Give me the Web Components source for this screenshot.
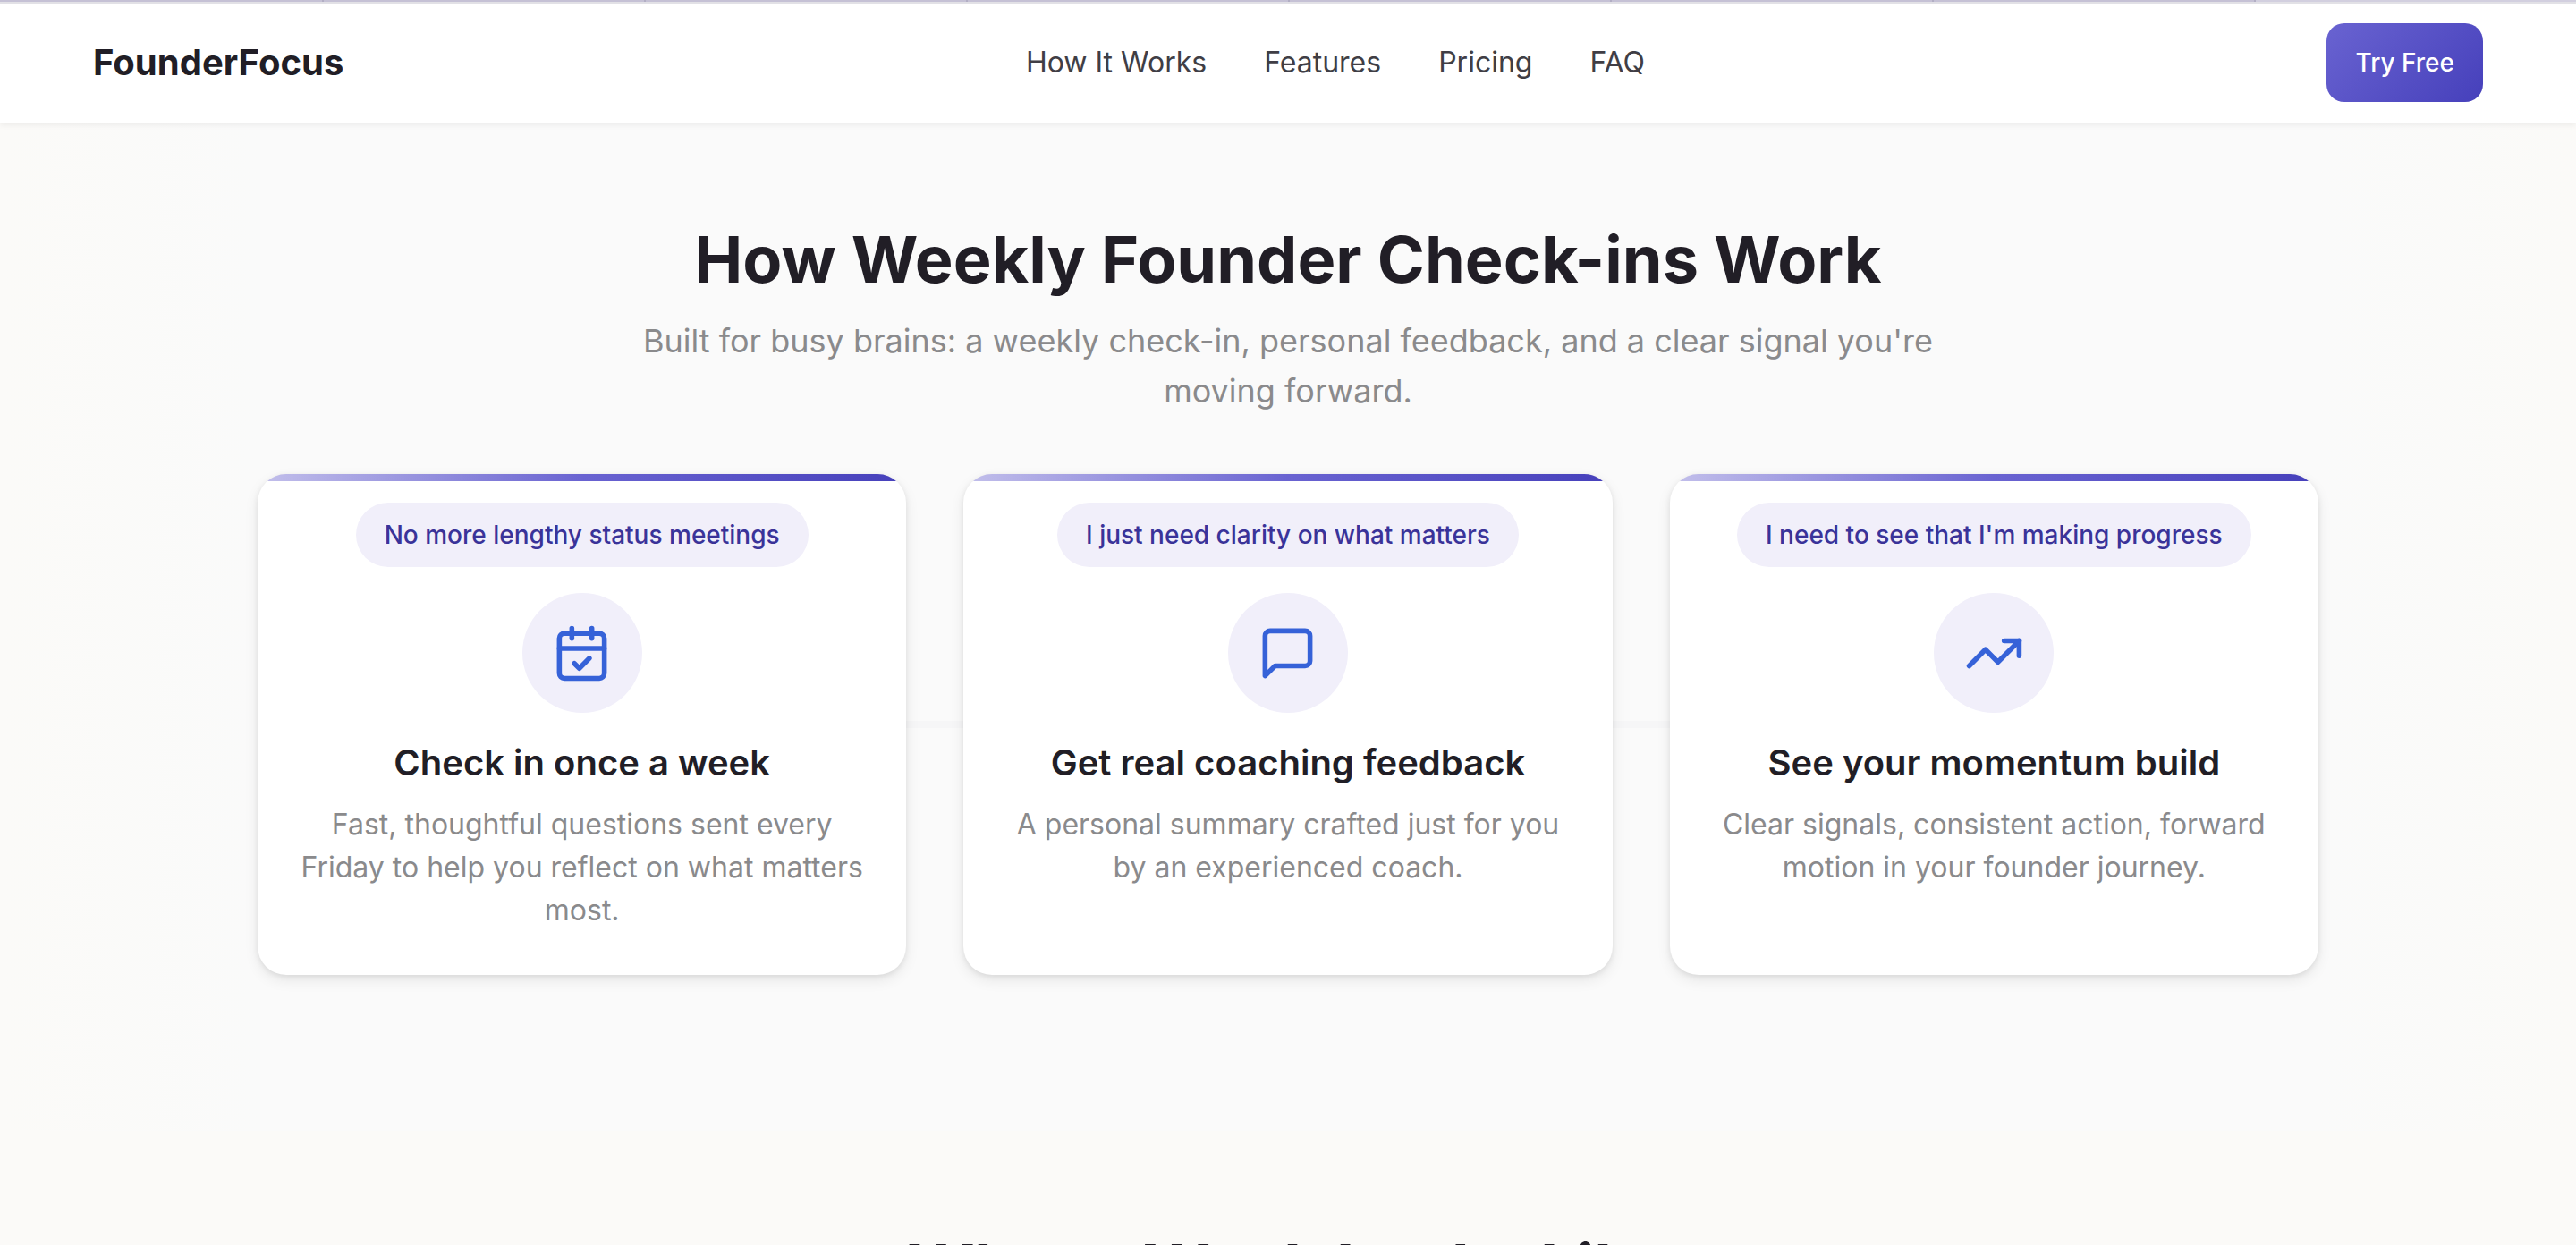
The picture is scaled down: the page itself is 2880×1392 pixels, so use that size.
<!DOCTYPE html>
<html lang="en">
<head>
<meta charset="utf-8">
<title>FounderFocus</title>
<style>
    body {
        margin: 0;
        height: 100vh;
        overflow: hidden;
        font-family: Inter, sans-serif;
        color: #211e26;
        background: #fbfaf8;
    }
</style>
</head>
<body>

<site-header>
    <a slot="brand" href="#top">FounderFocus</a>
    <a href="#how">How It Works</a>
    <a href="#features">Features</a>
    <a href="#pricing">Pricing</a>
    <a href="#faq">FAQ</a>
    <cta-button slot="action">Try Free</cta-button>
</site-header>

<main>
    <page-section id="how" class="tinted">
        <section-heading>
            How Weekly Founder Check-ins Work
            <span slot="lead">Built for busy brains: a weekly check-in, personal feedback, and a clear signal you're moving forward.</span>
        </section-heading>
        <step-list>
            <step-card data-icon="calendar" data-quote="No more lengthy status meetings" data-title="Check in once a week">Fast, thoughtful questions sent every Friday to help you reflect on what matters most.</step-card>
            <step-card data-icon="message" data-quote="I just need clarity on what matters" data-title="Get real coaching feedback">A personal summary crafted just for you by an experienced coach.</step-card>
            <step-card data-icon="trend" data-quote="I need to see that I'm making progress" data-title="See your momentum build">Clear signals, consistent action, forward motion in your founder journey.</step-card>
        </step-list>
    </page-section>
    <page-section id="features">
        <section-heading>What a Week Looks Like</section-heading>
    </page-section>
</main>

<script>
    function attach(host, html) {
        const template = document.createElement('template');
        template.innerHTML = html;

        const shadowRoot = host.attachShadow({ mode: 'open' });
        shadowRoot.appendChild(template.content.cloneNode(true));
    }

    class SiteHeader extends HTMLElement {

        constructor() {
            super();

            attach(this, `<style>
                    :host {
                        display: block;
                        position: relative;
                        background: #fff;
                        box-shadow: 0 2px 6px rgba(0, 0, 0, 0.06);
                    }

                    .strip {
                        display: grid;
                        grid-template-columns: repeat(8, 1fr);
                        height: 2px;
                        background: #c5c1d5;
                        border-bottom: 2px solid #e2e1e6;
                    }

                    .strip span + span {
                        border-left: 2px solid #b2aec4;
                    }

                    .strip span:last-child {
                        background: #d2cfdf;
                    }

                    .bar {
                        display: flex;
                        align-items: center;
                        justify-content: space-between;
                        padding: 22px 104px 24px;
                    }

                    nav {
                        display: flex;
                        gap: 64px;
                    }

                    ::slotted(a) {
                        font-size: 32px;
                        line-height: 40px;
                        color: #403e45;
                        text-decoration: none;
                    }

                    ::slotted(a[slot="brand"]) {
                        font-size: 40px;
                        font-weight: 700;
                        line-height: 48px;
                        color: #211e26;
                    }
                </style>
                <div class="strip"><span></span><span></span><span></span><span></span><span></span><span></span><span></span><span></span></div>
                <header class="bar">
                    <slot name="brand"></slot>
                    <nav><slot></slot></nav>
                    <slot name="action"></slot>
                </header>`);
        }
    }

    class CtaButton extends HTMLElement {

        constructor() {
            super();

            attach(this, `<style>
                    :host {
                        display: block;
                    }

                    button {
                        display: block;
                        padding: 24px 32px;
                        border: 0;
                        border-radius: 20px;
                        font: 500 28px/40px Inter, sans-serif;
                        color: #fff;
                        background: linear-gradient(135deg, #6963d1, #4640bb);
                    }
                </style>
                <button type="button"><slot></slot></button>`);
        }
    }

    class PageSection extends HTMLElement {

        constructor() {
            super();

            attach(this, `<style>
                    :host {
                        display: block;
                        padding: 109px 10% 128px;
                    }

                    :host(.tinted) {
                        padding-bottom: 175px;
                        background: linear-gradient(90deg, #fbfaf8, #fafafa 10%, #fafafa 90%, #fbfaf8);
                    }
                </style>
                <slot></slot>`);
        }
    }

    class SectionHeading extends HTMLElement {

        constructor() {
            super();

            attach(this, `<style>
                    :host {
                        display: block;
                        text-align: center;
                    }

                    h2 {
                        margin: 0;
                        font-size: 72px;
                        font-weight: 700;
                        line-height: 86px;
                    }

                    p {
                        max-width: 1460px;
                        margin: 20px auto 65px;
                        font-size: 36px;
                        line-height: 56px;
                        color: #8a8a8c;
                    }
                </style>
                <h2><slot></slot></h2>
                <p><slot name="lead"></slot></p>`);
        }
    }

    class StepList extends HTMLElement {

        constructor() {
            super();

            attach(this, `<style>
                    :host {
                        display: grid;
                        grid-template-columns: repeat(3, 1fr);
                        gap: 64px;
                        /* connector running behind the cards */
                        background: linear-gradient(#f6f6f7, #f6f6f7) center / 100% 8px no-repeat;
                    }
                </style>
                <slot></slot>`);
        }
    }

    const icons = {
        calendar: '<path d="M8 2v4M16 2v4M3 10h18"/><rect x="3" y="4" width="18" height="18" rx="2"/><path d="m9 16 2 2 4-4"/>',
        message: '<path d="M21 15a2 2 0 0 1-2 2H7l-4 4V5a2 2 0 0 1 2-2h14a2 2 0 0 1 2 2z"/>',
        trend: '<path d="m2 17 6.5-6.5 5 5L22 7"/><path d="M16 7h6v6"/>'
    };

    class StepCard extends HTMLElement {

        static get observedAttributes() { return ['data-icon', 'data-quote', 'data-title']; }

        constructor() {
            super();

            attach(this, `<style>
                    :host {
                        display: flex;
                        flex-direction: column;
                        align-items: center;
                        overflow: hidden;
                        padding: 0 40px 48px;
                        border-radius: 32px;
                        text-align: center;
                        background: linear-gradient(90deg, #c3c0eb, #6963d1 50%, #4640bb) top / 100% 8px no-repeat #fff;
                        box-shadow: 0 6px 16px rgba(0, 0, 0, 0.08), 0 2px 6px rgba(0, 0, 0, 0.08);
                    }

                    .quote {
                        margin-top: 32px;
                        padding: 16px 32px;
                        border-radius: 36px;
                        font-size: 28px;
                        font-weight: 500;
                        line-height: 40px;
                        color: #3a3399;
                        background: #f1effa;
                    }

                    .icon {
                        display: grid;
                        place-items: center;
                        width: 134px;
                        height: 134px;
                        margin: 29px 0 32px;
                        border-radius: 50%;
                        background: #f1effa;
                    }

                    svg {
                        width: 67px;
                        height: 67px;
                        fill: none;
                        stroke: #3662d8;
                        stroke-width: 2;
                        stroke-linecap: round;
                        stroke-linejoin: round;
                    }

                    h3 {
                        margin: 0 0 21px;
                        font-size: 40px;
                        font-weight: 600;
                        line-height: 48px;
                    }

                    p {
                        margin: 0;
                        font-size: 32px;
                        line-height: 48px;
                        color: #8a8a8c;
                    }
                </style>
                <div class="quote"></div>
                <div class="icon"><svg viewBox="0 0 24 24" aria-hidden="true"></svg></div>
                <h3></h3>
                <p><slot></slot></p>`);
        }

        attributeChangedCallback(name, oldValue, newValue) {

            switch (name) {
                case 'data-icon':
                    this.shadowRoot.querySelector('svg').innerHTML = icons[newValue];
                    break;
                case 'data-quote':
                    this.shadowRoot.querySelector('.quote').textContent = newValue;
                    break;
                case 'data-title':
                    this.shadowRoot.querySelector('h3').textContent = newValue;
                    break;
            }
        }
    }

    customElements.define('site-header', SiteHeader);
    customElements.define('cta-button', CtaButton);
    customElements.define('page-section', PageSection);
    customElements.define('section-heading', SectionHeading);
    customElements.define('step-list', StepList);
    customElements.define('step-card', StepCard);
</script>
</body>
</html>
